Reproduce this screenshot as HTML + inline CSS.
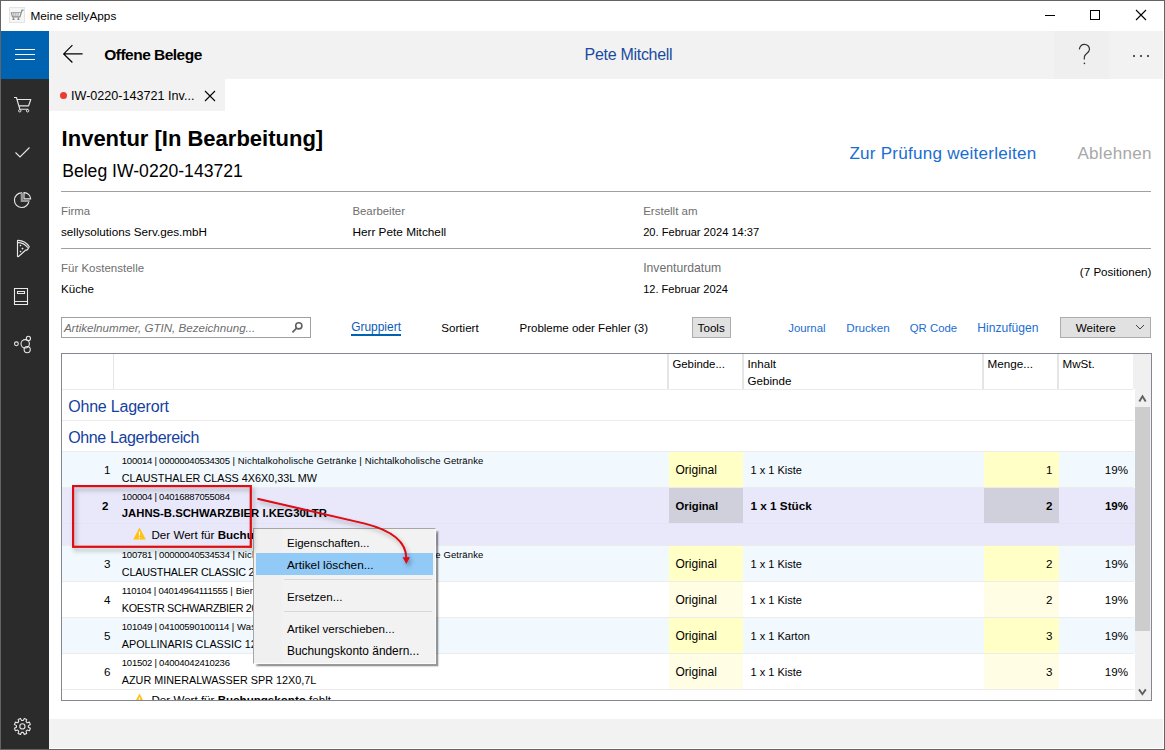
<!DOCTYPE html>
<html><head><meta charset="utf-8"><style>
html,body{margin:0;padding:0;width:1165px;height:750px;overflow:hidden;background:#fff}
body{position:relative;font-family:"Liberation Sans", sans-serif}
.t{position:absolute;white-space:nowrap}
.r{position:absolute}
</style></head><body>
<div class="r" style="left:0px;top:0px;width:1165px;height:750px;background:#fff"></div>
<svg class="r" style="left:9px;top:7px" width="16" height="16" viewBox="0 0 16 16">
<rect x="0.5" y="0.5" width="15" height="15" fill="#f6f6f6" stroke="#e4e4e4"/>
<path d="M2.2 5.6 L3.6 9.9 L10.9 9.9 L12.9 3.4 L14.6 3.1" stroke="#8a8a8a" stroke-width="1.2" fill="none"/>
<path d="M4.6 5.6 L5.2 9.9 M6.8 5.6 L7 9.9 M9.2 5.6 L8.9 9.9 M2.2 5.6 L12 5.6" stroke="#a0a0a0" stroke-width="1" fill="none"/>
<path d="M3.4 12.3 L5.6 12.3 M8.3 12.3 L10.5 12.3 M4.5 10.5 L4.5 12.5 M9.4 10.5 L9.4 12.5" stroke="#8a8a8a" stroke-width="1.2" fill="none"/>
</svg>
<div class="t" style="left:30.40px;top:11px;font-size:11.8px;line-height:11.8px;color:#000;font-weight:normal;font-style:normal;">Meine sellyApps</div>
<div class="r" style="left:1045px;top:15px;width:10px;height:1px;background:#000"></div>
<div class="r" style="left:1090px;top:10px;width:10px;height:10px;border:1px solid #000;box-sizing:border-box"></div>
<svg class="r" style="left:1135px;top:9px" width="12" height="12" viewBox="0 0 12 12"><path d="M1 1 L11 11 M11 1 L1 11" stroke="#000" stroke-width="1.1"/></svg>
<div class="r" style="left:1px;top:31px;width:48px;height:48px;background:#0063b1"></div>
<div class="r" style="left:1px;top:79px;width:48px;height:671px;background:#2b2b2b"></div>
<div class="r" style="left:15px;top:49px;width:20px;height:1px;background:#fff"></div>
<div class="r" style="left:15px;top:54px;width:20px;height:1px;background:#fff"></div>
<div class="r" style="left:15px;top:59px;width:20px;height:1px;background:#fff"></div>
<svg class="r" style="left:8px;top:90px" width="30" height="30" viewBox="0 0 30 30">
<path d="M6 7.5 L8.4 7.5 L11.8 19.2 L20.3 19.2 M9.1 9.5 L22.8 9.5 L20.6 15.8 L10.9 15.8" stroke="#e6e6e6" stroke-width="1.15" fill="none" stroke-linejoin="round"/>
<circle cx="11.8" cy="20.8" r="1.2" stroke="#e6e6e6" stroke-width="1" fill="none"/><circle cx="19.6" cy="20.8" r="1.2" stroke="#e6e6e6" stroke-width="1" fill="none"/>
</svg>
<svg class="r" style="left:14px;top:146px" width="17" height="13" viewBox="0 0 17 13"><path d="M1.5 6.5 L6 11 L15.5 1.5" stroke="#e8e8e8" stroke-width="1.1" fill="none"/></svg>
<svg class="r" style="left:8px;top:185px" width="30" height="30" viewBox="0 0 30 30">
<path d="M13.6 7.9 A7.3 7.3 0 1 0 21 16 L13.8 16 Z" stroke="#e6e6e6" stroke-width="1.15" fill="none"/>
<path d="M13.8 8 L13.8 16 L21 16" stroke="#9a9a9a" stroke-width="2.2" fill="none"/>
<path d="M16 7.6 A6.5 6.5 0 0 1 22.6 13.8 L16 13.8 Z" stroke="#e6e6e6" stroke-width="1.15" fill="none"/>
</svg>
<svg class="r" style="left:8px;top:235px" width="30" height="30" viewBox="0 0 30 30">
<path d="M9.5 5.5 L9.5 21.3 Q10 22 10.8 21.3 L17.8 15 Q19.5 15.5 20.3 13.3 L21.3 11.8 Q17 5.3 10.2 5.3 Z" stroke="#e6e6e6" stroke-width="1.15" fill="none" stroke-linejoin="round"/>
<path d="M10 7.6 Q16 7.6 19.8 12.6" stroke="#e6e6e6" stroke-width="1.1" fill="none"/>
<path d="M12.5 9.5 L13.5 10.5 L12.5 11.5 L11.5 10.5 Z M14.5 12.5 L15.6 13.6 L14.5 14.7 L13.4 13.6 Z M12.5 15.5 L13.5 16.5 L12.5 17.5 L11.5 16.5 Z" fill="#e6e6e6"/>
</svg>
<svg class="r" style="left:13px;top:287px" width="16" height="19" viewBox="0 0 16 19">
<path d="M1.5 1.5 L14.5 1.5 L14.5 17.5 L1.5 17.5 Z M1.5 14.5 L14.5 14.5 M4.5 4.5 L11.5 4.5 L11.5 6.5 L4.5 6.5 Z" stroke="#e8e8e8" stroke-width="1.1" fill="none"/>
</svg>
<svg class="r" style="left:8px;top:330px" width="30" height="30" viewBox="0 0 30 30" fill="none" stroke="#e6e6e6" stroke-width="1.1">
<circle cx="8.4" cy="13.8" r="1.9"/><circle cx="17.2" cy="13.8" r="4.2"/><circle cx="20.4" cy="8.4" r="2.1"/><circle cx="19.2" cy="19.6" r="3.1"/>
</svg>
<svg class="r" style="left:8px;top:712px" width="30" height="30" viewBox="0 0 30 30" fill="none" stroke="#e6e6e6" stroke-width="1.1">
<path d="M20.35 13.62 L22.37 12.49 L21.39 10.12 L19.16 10.75 L18.05 9.64 L18.68 7.41 L16.31 6.43 L15.18 8.45 L13.62 8.45 L12.49 6.43 L10.12 7.41 L10.75 9.64 L9.64 10.75 L7.41 10.12 L6.43 12.49 L8.45 13.62 L8.45 15.18 L6.43 16.31 L7.41 18.68 L9.64 18.05 L10.75 19.16 L10.12 21.39 L12.49 22.37 L13.62 20.35 L15.18 20.35 L16.31 22.37 L18.68 21.39 L18.05 19.16 L19.16 18.05 L21.39 18.68 L22.37 16.31 L20.35 15.18 Z" stroke-linejoin="round"/><circle cx="14.4" cy="14.4" r="2.6"/>
</svg>
<div class="r" style="left:49px;top:31px;width:1114px;height:48px;background:#f2f2f2"></div>
<div class="r" style="left:1054px;top:31px;width:55px;height:48px;background:#efefef"></div>
<svg class="r" style="left:55px;top:40px" width="35" height="30" viewBox="0 0 35 30"><path d="M17.4 5.2 L8.7 13.9 L17.4 22.5 M8.7 13.9 L27.6 13.9" stroke="#000" stroke-width="1.2" fill="none"/></svg>
<div class="t" style="left:104.30px;top:47px;font-size:15.5px;line-height:15.5px;color:#000;font-weight:bold;font-style:normal;letter-spacing:-0.52px">Offene Belege</div>
<div class="t" style="left:584.60px;top:47px;font-size:16px;line-height:16px;color:#1a4aa0;font-weight:normal;font-style:normal;letter-spacing:-0.3px">Pete Mitchell</div>
<svg class="r" style="left:1070px;top:40px" width="30" height="30" viewBox="0 0 30 30"><path d="M9.3 9.4 C9.8 6.2 12 4.3 14.4 4.3 C17.2 4.3 19.5 6.5 19.5 9.2 C19.5 11.4 18 12.7 16.2 14 C14.9 15 14.3 16 14.3 17.5 L14.3 19.6" stroke="#333" stroke-width="1.2" fill="none"/><circle cx="14.4" cy="23.4" r="0.8" fill="#333"/></svg>
<div class="r" style="left:1133px;top:55px;width:2px;height:2px;border-radius:1px;background:#222"></div>
<div class="r" style="left:1140px;top:55px;width:2px;height:2px;border-radius:1px;background:#222"></div>
<div class="r" style="left:1147px;top:55px;width:2px;height:2px;border-radius:1px;background:#222"></div>
<div class="r" style="left:49px;top:79px;width:176px;height:32px;background:#f2f2f2"></div>
<div class="r" style="left:60px;top:92px;width:7px;height:7px;border-radius:50%;background:#f03a2e"></div>
<div class="t" style="left:71.00px;top:90px;font-size:12.6px;line-height:12.6px;color:#000;font-weight:normal;font-style:normal;">IW-0220-143721 Inv...</div>
<svg class="r" style="left:204px;top:90px" width="12" height="12" viewBox="0 0 12 12"><path d="M1 1 L11 11 M11 1 L1 11" stroke="#000" stroke-width="1.1"/></svg>
<div class="t" style="left:61.60px;top:128px;font-size:22px;line-height:22px;color:#000;font-weight:bold;font-style:normal;">Inventur [In Bearbeitung]</div>
<div class="t" style="left:62.20px;top:163px;font-size:17.6px;line-height:17.6px;color:#000;font-weight:normal;font-style:normal;">Beleg IW-0220-143721</div>
<div class="t" style="left:849.40px;top:145px;font-size:17.1px;line-height:17.1px;color:#1a6dd1;font-weight:normal;font-style:normal;letter-spacing:0.23px">Zur Prüfung weiterleiten</div>
<div class="t" style="left:1077.40px;top:145px;font-size:17.1px;line-height:17.1px;color:#a8a8a8;font-weight:normal;font-style:normal;letter-spacing:0.28px">Ablehnen</div>
<div class="r" style="left:61px;top:191px;width:1090px;height:1px;background:#a0a0a0"></div>
<div class="t" style="left:61.00px;top:206px;font-size:11.4px;line-height:11.4px;color:#6e6e6e;font-weight:normal;font-style:normal;">Firma</div>
<div class="t" style="left:61.00px;top:226px;font-size:11.7px;line-height:11.7px;color:#000;font-weight:normal;font-style:normal;">sellysolutions Serv.ges.mbH</div>
<div class="t" style="left:352.40px;top:206px;font-size:11.4px;line-height:11.4px;color:#6e6e6e;font-weight:normal;font-style:normal;">Bearbeiter</div>
<div class="t" style="left:352.40px;top:227px;font-size:11.8px;line-height:11.8px;color:#000;font-weight:normal;font-style:normal;">Herr Pete Mitchell</div>
<div class="t" style="left:643.20px;top:206px;font-size:11.5px;line-height:11.5px;color:#6e6e6e;font-weight:normal;font-style:normal;">Erstellt am</div>
<div class="t" style="left:643.20px;top:227px;font-size:11.1px;line-height:11.1px;color:#000;font-weight:normal;font-style:normal;">20. Februar 2024 14:37</div>
<div class="r" style="left:61px;top:248px;width:1090px;height:1px;background:#a0a0a0"></div>
<div class="t" style="left:61.00px;top:263px;font-size:11.5px;line-height:11.5px;color:#6e6e6e;font-weight:normal;font-style:normal;">Für Kostenstelle</div>
<div class="t" style="left:61.00px;top:283px;font-size:11.6px;line-height:11.6px;color:#000;font-weight:normal;font-style:normal;">Küche</div>
<div class="t" style="left:643.20px;top:262px;font-size:12.2px;line-height:12.2px;color:#6e6e6e;font-weight:normal;font-style:normal;">Inventurdatum</div>
<div class="t" style="left:643.20px;top:284px;font-size:11.05px;line-height:11.05px;color:#000;font-weight:normal;font-style:normal;">12. Februar 2024</div>
<div class="t" style="right:13.60px;top:266px;font-size:11.6px;line-height:11.6px;color:#000;font-weight:normal;font-style:normal;">(7 Positionen)</div>
<div class="r" style="left:61px;top:317px;width:250px;height:21px;border:1px solid #a0a0a0;box-sizing:border-box;background:#fff"></div>
<div class="t" style="left:63.90px;top:322px;font-size:11.6px;line-height:11.6px;color:#6d6d6d;font-weight:normal;font-style:italic;">Artikelnummer, GTIN, Bezeichnung...</div>
<svg class="r" style="left:290px;top:321px" width="14" height="14" viewBox="0 0 14 14"><circle cx="8.8" cy="4.8" r="3.1" stroke="#606060" stroke-width="1.6" fill="none"/><path d="M6.6 7.1 L2.4 11.3" stroke="#606060" stroke-width="1.7"/></svg>
<div class="t" style="left:351.20px;top:322px;font-size:11.95px;line-height:11.95px;color:#0a5cb8;font-weight:normal;font-style:normal;">Gruppiert</div>
<div class="r" style="left:351px;top:334px;width:50px;height:2px;background:#0063b1"></div>
<div class="t" style="left:441.30px;top:322px;font-size:11.6px;line-height:11.6px;color:#000;font-weight:normal;font-style:normal;">Sortiert</div>
<div class="t" style="left:519.50px;top:323px;font-size:11.5px;line-height:11.5px;color:#000;font-weight:normal;font-style:normal;">Probleme oder Fehler (3)</div>
<div class="r" style="left:692px;top:317px;width:39px;height:21px;background:#e1e1e1;border:1px solid #adadad;box-sizing:border-box"></div>
<div class="t" style="left:697.60px;top:322px;font-size:11.65px;line-height:11.65px;color:#000;font-weight:normal;font-style:normal;">Tools</div>
<div class="t" style="left:788.20px;top:323px;font-size:11.4px;line-height:11.4px;color:#1a6dd1;font-weight:normal;font-style:normal;">Journal</div>
<div class="t" style="left:846.20px;top:322px;font-size:11.7px;line-height:11.7px;color:#1a6dd1;font-weight:normal;font-style:normal;">Drucken</div>
<div class="t" style="left:909.80px;top:323px;font-size:11.35px;line-height:11.35px;color:#1a6dd1;font-weight:normal;font-style:normal;">QR Code</div>
<div class="t" style="left:977.30px;top:322px;font-size:12.1px;line-height:12.1px;color:#1a6dd1;font-weight:normal;font-style:normal;">Hinzufügen</div>
<div class="r" style="left:1060px;top:317px;width:91px;height:21px;background:#e1e1e1;border:1px solid #adadad;box-sizing:border-box"></div>
<div class="t" style="left:1075.80px;top:322px;font-size:11.7px;line-height:11.7px;color:#000;font-weight:normal;font-style:normal;">Weitere</div>
<svg class="r" style="left:1135px;top:324px" width="10" height="6" viewBox="0 0 10 6"><path d="M1 1 L5 5 L9 1" stroke="#444" stroke-width="1" fill="none"/></svg>
<div class="r" style="left:61px;top:353px;width:1091px;height:348px;border:1px solid #828790;box-sizing:border-box;background:#fff"></div>
<div class="r" style="left:1133px;top:354px;width:18px;height:35px;background:#f0f0f0"></div>
<div class="r" style="left:113px;top:354px;width:1px;height:35px;background:#e5e5e5"></div>
<div class="r" style="left:667px;top:354px;width:2px;height:35px;background:#e5e5e5"></div>
<div class="r" style="left:742px;top:354px;width:2px;height:35px;background:#e5e5e5"></div>
<div class="r" style="left:982px;top:354px;width:2px;height:35px;background:#e5e5e5"></div>
<div class="r" style="left:1057px;top:354px;width:2px;height:35px;background:#e5e5e5"></div>
<div class="r" style="left:62px;top:389px;width:1071px;height:1px;background:#ececec"></div>
<div class="t" style="left:672.40px;top:359px;font-size:11.4px;line-height:11.4px;color:#000;font-weight:normal;font-style:normal;">Gebinde...</div>
<div class="t" style="left:747.60px;top:358px;font-size:11.6px;line-height:11.6px;color:#000;font-weight:normal;font-style:normal;">Inhalt</div>
<div class="t" style="left:747.60px;top:375px;font-size:11.6px;line-height:11.6px;color:#000;font-weight:normal;font-style:normal;">Gebinde</div>
<div class="t" style="left:987.50px;top:358px;font-size:11.7px;line-height:11.7px;color:#000;font-weight:normal;font-style:normal;">Menge...</div>
<div class="t" style="left:1062.50px;top:358px;font-size:11.6px;line-height:11.6px;color:#000;font-weight:normal;font-style:normal;">MwSt.</div>
<div class="t" style="left:68.20px;top:399px;font-size:16px;line-height:16px;color:#163f9e;font-weight:normal;font-style:normal;letter-spacing:-0.2px">Ohne Lagerort</div>
<div class="r" style="left:62px;top:420px;width:1072px;height:1px;background:#ececec"></div>
<div class="t" style="left:68.20px;top:430px;font-size:16px;line-height:16px;color:#163f9e;font-weight:normal;font-style:normal;letter-spacing:-0.36px">Ohne Lagerbereich</div>
<div class="r" style="left:62px;top:451px;width:1072px;height:1px;background:#ececec"></div>
<div class="r" style="left:62px;top:452px;width:1073px;height:35px;background:#f1f9fe"></div>
<div class="r" style="left:62px;top:487px;width:1072px;height:1px;background:#ececec"></div>
<div class="r" style="left:669px;top:452px;width:74px;height:35px;background:#ffffc6"></div>
<div class="r" style="left:984px;top:452px;width:75px;height:35px;background:#ffffc6"></div>
<div class="t" style="left:121.80px;top:456px;font-size:9.5px;line-height:9.5px;color:#000;font-weight:normal;font-style:normal;"><span style="letter-spacing:-0.24px">100014 | 00000040534305</span><span style="letter-spacing:0.12px"> | Nichtalkoholische Getränke | Nichtalkoholische Getränke</span></div>
<div class="t" style="left:104.00px;top:464px;font-size:11.6px;line-height:11.6px;color:#000;font-weight:normal;font-style:normal;">1</div>
<div class="t" style="left:121.80px;top:473px;font-size:10.8px;line-height:10.8px;color:#000;font-weight:normal;font-style:normal;">CLAUSTHALER CLASS 4X6X0,33L MW</div>
<div class="t" style="left:675.50px;top:464px;font-size:12px;line-height:12px;color:#000;font-weight:normal;font-style:normal;">Original</div>
<div class="t" style="left:750.60px;top:465px;font-size:11.0px;line-height:11.0px;color:#000;font-weight:normal;font-style:normal;">1 x 1 Kiste</div>
<div class="t" style="right:112.50px;top:464px;font-size:11.6px;line-height:11.6px;color:#000;font-weight:normal;font-style:normal;">1</div>
<div class="t" style="right:37.00px;top:464px;font-size:11.6px;line-height:11.6px;color:#000;font-weight:normal;font-style:normal;">19%</div>
<div class="r" style="left:62px;top:488px;width:1073px;height:57px;background:#e8e8fa"></div>
<div class="r" style="left:62px;top:545px;width:1072px;height:1px;background:#ececec"></div>
<div class="r" style="left:669px;top:488px;width:74px;height:35px;background:#d0d0dc"></div>
<div class="r" style="left:984px;top:488px;width:75px;height:35px;background:#d0d0dc"></div>
<div class="t" style="left:121.80px;top:492px;font-size:9.5px;line-height:9.5px;color:#000;font-weight:normal;font-style:normal;"><span style="letter-spacing:-0.24px">100004 | 04016887055084</span><span style="letter-spacing:0.12px"></span></div>
<div class="t" style="left:102.00px;top:501px;font-size:11.5px;line-height:11.5px;color:#000;font-weight:bold;font-style:normal;">2</div>
<div class="t" style="left:121.80px;top:508px;font-size:11.3px;line-height:11.3px;color:#000;font-weight:bold;font-style:normal;">JAHNS-B.SCHWARZBIER I.KEG30LTR</div>
<div class="t" style="left:675.50px;top:501px;font-size:11.25px;line-height:11.25px;color:#000;font-weight:bold;font-style:normal;">Original</div>
<div class="t" style="left:750.60px;top:500px;font-size:11.7px;line-height:11.7px;color:#000;font-weight:bold;font-style:normal;">1 x 1 Stück</div>
<div class="t" style="right:112.50px;top:501px;font-size:11.5px;line-height:11.5px;color:#000;font-weight:bold;font-style:normal;">2</div>
<div class="t" style="right:37.00px;top:501px;font-size:11.5px;line-height:11.5px;color:#000;font-weight:bold;font-style:normal;">19%</div>
<div class="r" style="left:62px;top:523px;width:1072px;height:1px;background:#e4e4f2"></div>
<svg class="r" style="left:133px;top:527px" width="13" height="13" viewBox="0 0 13 13"><path d="M6.5 0.5 L12.8 12.5 L0.2 12.5 Z" fill="#ffc20e"/><path d="M6.5 4.5 L6.5 8.5 M6.5 10 L6.5 11.2" stroke="#fff" stroke-width="1.2"/></svg>
<div class="t" style="left:151.50px;top:529px;font-size:11.6px;line-height:11.6px;color:#000;font-weight:normal;font-style:normal;">Der Wert für <b>Buchungskonto</b> fehlt</div>
<div class="r" style="left:62px;top:546px;width:1073px;height:35px;background:#f1f9fe"></div>
<div class="r" style="left:62px;top:581px;width:1072px;height:1px;background:#ececec"></div>
<div class="r" style="left:669px;top:546px;width:74px;height:35px;background:#ffffc6"></div>
<div class="r" style="left:984px;top:546px;width:75px;height:35px;background:#ffffc6"></div>
<div class="t" style="left:121.80px;top:550px;font-size:9.5px;line-height:9.5px;color:#000;font-weight:normal;font-style:normal;"><span style="letter-spacing:-0.24px">100781 | 00000040534534</span><span style="letter-spacing:0.12px"> | Nichtalkoholische Getränke | Nichtalkoholische Getränke</span></div>
<div class="t" style="left:104.00px;top:558px;font-size:11.6px;line-height:11.6px;color:#000;font-weight:normal;font-style:normal;">3</div>
<div class="t" style="left:121.80px;top:567px;font-size:10.8px;line-height:10.8px;color:#000;font-weight:normal;font-style:normal;letter-spacing:-0.2px">CLAUSTHALER CLASSIC 2X6X0,33L MW</div>
<div class="t" style="left:675.50px;top:558px;font-size:12px;line-height:12px;color:#000;font-weight:normal;font-style:normal;">Original</div>
<div class="t" style="left:750.60px;top:559px;font-size:11.0px;line-height:11.0px;color:#000;font-weight:normal;font-style:normal;">1 x 1 Kiste</div>
<div class="t" style="right:112.50px;top:558px;font-size:11.6px;line-height:11.6px;color:#000;font-weight:normal;font-style:normal;">2</div>
<div class="t" style="right:37.00px;top:558px;font-size:11.6px;line-height:11.6px;color:#000;font-weight:normal;font-style:normal;">19%</div>
<div class="r" style="left:62px;top:582px;width:1073px;height:35px;background:#ffffff"></div>
<div class="r" style="left:62px;top:617px;width:1072px;height:1px;background:#ececec"></div>
<div class="r" style="left:669px;top:582px;width:74px;height:35px;background:#fffde3"></div>
<div class="r" style="left:984px;top:582px;width:75px;height:35px;background:#fffde3"></div>
<div class="t" style="left:121.80px;top:586px;font-size:9.5px;line-height:9.5px;color:#000;font-weight:normal;font-style:normal;"><span style="letter-spacing:-0.24px">110104 | 04014964111555</span><span style="letter-spacing:0.12px"> | Bier | Bier</span></div>
<div class="t" style="left:104.00px;top:594px;font-size:11.6px;line-height:11.6px;color:#000;font-weight:normal;font-style:normal;">4</div>
<div class="t" style="left:121.80px;top:603px;font-size:10.8px;line-height:10.8px;color:#000;font-weight:normal;font-style:normal;letter-spacing:-0.3px">KOESTR SCHWARZBIER 20X0,5L</div>
<div class="t" style="left:675.50px;top:594px;font-size:12px;line-height:12px;color:#000;font-weight:normal;font-style:normal;">Original</div>
<div class="t" style="left:750.60px;top:595px;font-size:11.0px;line-height:11.0px;color:#000;font-weight:normal;font-style:normal;">1 x 1 Kiste</div>
<div class="t" style="right:112.50px;top:594px;font-size:11.6px;line-height:11.6px;color:#000;font-weight:normal;font-style:normal;">2</div>
<div class="t" style="right:37.00px;top:594px;font-size:11.6px;line-height:11.6px;color:#000;font-weight:normal;font-style:normal;">19%</div>
<div class="r" style="left:62px;top:618px;width:1073px;height:35px;background:#f1f9fe"></div>
<div class="r" style="left:62px;top:653px;width:1072px;height:1px;background:#ececec"></div>
<div class="r" style="left:669px;top:618px;width:74px;height:35px;background:#ffffc6"></div>
<div class="r" style="left:984px;top:618px;width:75px;height:35px;background:#ffffc6"></div>
<div class="t" style="left:121.80px;top:622px;font-size:9.5px;line-height:9.5px;color:#000;font-weight:normal;font-style:normal;"><span style="letter-spacing:-0.24px">101049 | 04100590100114</span><span style="letter-spacing:0.12px"> | Wasser | Wasser</span></div>
<div class="t" style="left:104.00px;top:630px;font-size:11.6px;line-height:11.6px;color:#000;font-weight:normal;font-style:normal;">5</div>
<div class="t" style="left:121.80px;top:639px;font-size:10.8px;line-height:10.8px;color:#000;font-weight:normal;font-style:normal;">APOLLINARIS CLASSIC 12X0,75L</div>
<div class="t" style="left:675.50px;top:630px;font-size:12px;line-height:12px;color:#000;font-weight:normal;font-style:normal;">Original</div>
<div class="t" style="left:750.60px;top:631px;font-size:11.0px;line-height:11.0px;color:#000;font-weight:normal;font-style:normal;">1 x 1 Karton</div>
<div class="t" style="right:112.50px;top:630px;font-size:11.6px;line-height:11.6px;color:#000;font-weight:normal;font-style:normal;">3</div>
<div class="t" style="right:37.00px;top:630px;font-size:11.6px;line-height:11.6px;color:#000;font-weight:normal;font-style:normal;">19%</div>
<div class="r" style="left:62px;top:654px;width:1073px;height:35px;background:#ffffff"></div>
<div class="r" style="left:62px;top:689px;width:1072px;height:1px;background:#ececec"></div>
<div class="r" style="left:669px;top:654px;width:74px;height:35px;background:#fffde3"></div>
<div class="r" style="left:984px;top:654px;width:75px;height:35px;background:#fffde3"></div>
<div class="t" style="left:121.80px;top:658px;font-size:9.5px;line-height:9.5px;color:#000;font-weight:normal;font-style:normal;"><span style="letter-spacing:-0.24px">101502 | 04004042410236</span><span style="letter-spacing:0.12px"></span></div>
<div class="t" style="left:104.00px;top:666px;font-size:11.6px;line-height:11.6px;color:#000;font-weight:normal;font-style:normal;">6</div>
<div class="t" style="left:121.80px;top:675px;font-size:10.8px;line-height:10.8px;color:#000;font-weight:normal;font-style:normal;">AZUR MINERALWASSER SPR 12X0,7L</div>
<div class="t" style="left:675.50px;top:666px;font-size:12px;line-height:12px;color:#000;font-weight:normal;font-style:normal;">Original</div>
<div class="t" style="left:750.60px;top:667px;font-size:11.0px;line-height:11.0px;color:#000;font-weight:normal;font-style:normal;">1 x 1 Kiste</div>
<div class="t" style="right:112.50px;top:666px;font-size:11.6px;line-height:11.6px;color:#000;font-weight:normal;font-style:normal;">3</div>
<div class="t" style="right:37.00px;top:666px;font-size:11.6px;line-height:11.6px;color:#000;font-weight:normal;font-style:normal;">19%</div>
<svg class="r" style="left:133px;top:693px" width="13" height="13" viewBox="0 0 13 13"><path d="M6.5 0.5 L12.8 12.5 L0.2 12.5 Z" fill="#ffc20e"/><path d="M6.5 4.5 L6.5 8.5 M6.5 10 L6.5 11.2" stroke="#fff" stroke-width="1.2"/></svg>
<div class="t" style="left:151.50px;top:694px;font-size:11.6px;line-height:11.6px;color:#000;font-weight:normal;font-style:normal;">Der Wert für <b>Buchungskonto</b> fehlt</div>
<div class="r" style="left:49px;top:701px;width:1115px;height:18px;background:#fff"></div>
<div class="r" style="left:61px;top:700px;width:1091px;height:1px;background:#828790"></div>
<div class="r" style="left:1135px;top:389px;width:16px;height:311px;background:#f0f0f0"></div>
<div class="r" style="left:1135px;top:407px;width:15px;height:224px;background:#cdcdcd"></div>
<svg class="r" style="left:1135px;top:390px" width="16" height="16" viewBox="0 0 16 16"><path d="M4.3 11.5 L7.5 6.3 L10.7 11.5" stroke="#606060" stroke-width="1.9" fill="none"/></svg>
<svg class="r" style="left:1135px;top:684px" width="16" height="16" viewBox="0 0 16 16"><path d="M4 5.4 L7.4 10.2 L10.8 5.4" stroke="#606060" stroke-width="1.9" fill="none"/></svg>
<div class="r" style="left:253px;top:528px;width:183px;height:136px;background:#f2f2f2;border:1px solid #a6a6a6;border-right-color:#fbfbfb;border-bottom-color:#fbfbfb;box-sizing:border-box;box-shadow:2.5px 2.5px 1.5px rgba(0,0,0,0.4)"></div>
<div class="r" style="left:254px;top:529px;width:28px;height:134px;background:#f0f0f0"></div>
<div class="r" style="left:256px;top:553px;width:177px;height:22px;background:#91c9f7"></div>
<div class="r" style="left:284px;top:579px;width:148px;height:1px;background:#d7d7d7"></div>
<div class="r" style="left:284px;top:611px;width:148px;height:1px;background:#d7d7d7"></div>
<div class="t" style="left:287.00px;top:538px;font-size:11.5px;line-height:11.5px;color:#000;font-weight:normal;font-style:normal;">Eigenschaften...</div>
<div class="t" style="left:287.00px;top:560px;font-size:11.8px;line-height:11.8px;color:#000;font-weight:normal;font-style:normal;">Artikel löschen...</div>
<div class="t" style="left:287.00px;top:591px;font-size:11.6px;line-height:11.6px;color:#000;font-weight:normal;font-style:normal;">Ersetzen...</div>
<div class="t" style="left:287.00px;top:623px;font-size:11.6px;line-height:11.6px;color:#000;font-weight:normal;font-style:normal;">Artikel verschieben...</div>
<div class="t" style="left:287.00px;top:646px;font-size:11.9px;line-height:11.9px;color:#000;font-weight:normal;font-style:normal;">Buchungskonto ändern...</div>
<svg class="r" style="left:0;top:0" width="1165" height="750" viewBox="0 0 1165 750">
<defs><filter id="sh" x="-20%" y="-20%" width="140%" height="140%"><feDropShadow dx="2" dy="3" stdDeviation="2" flood-color="#000" flood-opacity="0.3"/></filter></defs>
<g filter="url(#sh)">
<rect x="73.1" y="486.1" width="177.7" height="60.7" fill="none" stroke="#dc0812" stroke-width="2.2"/>
<path d="M257.4 498.7 L365 523.6 C390 530 406.3 540 406.3 558" fill="none" stroke="#dc0812" stroke-width="2"/>
<path d="M402.6 557.3 L406.3 564 L410 557.3 Z" fill="#dc0812"/>
</g></svg>
<div class="r" style="left:49px;top:719px;width:1114px;height:29px;background:#f2f2f2"></div>
<div class="r" style="left:0;top:0;width:1165px;height:750px;box-sizing:border-box;border:1px solid #646464"></div>
</body></html>
